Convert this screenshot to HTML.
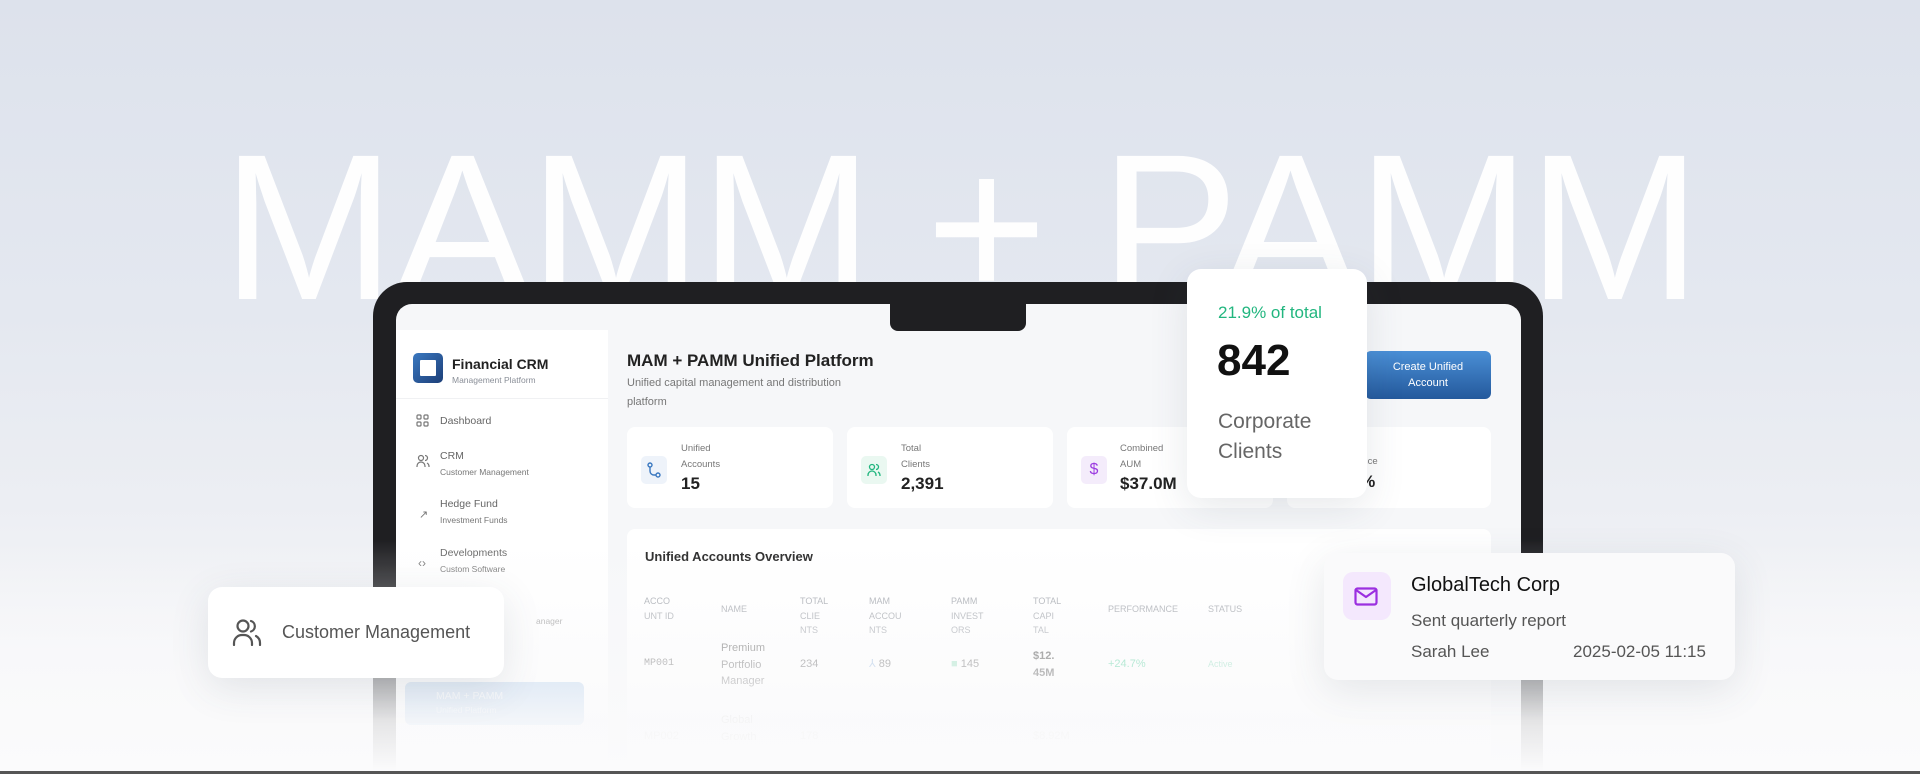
<!DOCTYPE html>
<html><head><meta charset="utf-8"><style>
*{margin:0;padding:0;box-sizing:border-box}
html,body{width:1920px;height:774px;overflow:hidden}
body{position:relative;font-family:"Liberation Sans",sans-serif;background:linear-gradient(180deg,#dde2ec 0%,#e4e8f0 40%,#eceef3 65%,#f5f6f8 85%,#fbfbfc 100%)}
#wrap{position:absolute;left:0;top:0;width:1920px;height:774px;overflow:hidden}
.abs{position:absolute}
.big{left:222px;top:124px;font-size:208px;color:#fff;letter-spacing:-2.5px;white-space:nowrap;line-height:1;font-weight:400;opacity:.97}
.frame{left:373px;top:282px;width:1170px;height:489px;background:#1f1f22;border-radius:34px 34px 0 0}
.screen{left:396px;top:304px;width:1125px;height:467px;background:#f6f7f9;border-radius:16px 16px 0 0;overflow:hidden}
.notch{left:890px;top:304px;width:136px;height:27px;background:#1f1f22;border-radius:0 0 8px 8px}
.side{left:0;top:26px;width:212px;height:441px;background:#fff}
.t{color:#222}
.card{background:#fff;border-radius:8px}
.muted{color:#8a8f98}
.th{font-size:9px;color:#a0a4ab;line-height:14.5px}
.td{font-size:11px;color:#666;line-height:16.5px}
.fade{left:0;top:540px;width:1920px;height:231px;background:linear-gradient(180deg,rgba(250,250,251,0) 0%,rgba(250,250,251,.45) 40%,rgba(250,250,251,.9) 78%,#fbfbfc 100%)}
.fl{background:#fff;border-radius:14px;box-shadow:0 10px 40px rgba(60,70,90,.12)}
</style></head><body><div id="wrap">
<div class="abs big">MAMM + PAMM</div>
<div class="abs frame"></div>
<div class="abs screen">
  <div class="abs side">
    <div class="abs" style="left:17px;top:23px;width:30px;height:30px;border-radius:5px;background:linear-gradient(135deg,#3a78c0,#1d3f78)"><div style="margin:7px;width:16px;height:16px;background:#fff;border-radius:1px"></div></div>
    <div class="abs t" style="left:56px;top:26px;font-size:14px;font-weight:bold">Financial CRM</div>
    <div class="abs muted" style="left:56px;top:45px;font-size:8.5px">Management Platform</div>
    <div class="abs" style="left:0;top:68px;width:212px;height:1px;background:#f0f1f3"></div>
    <svg class="abs" style="left:20px;top:84px" width="13" height="13" viewBox="0 0 13 13" fill="none" stroke="#777" stroke-width="1.2"><rect x="1" y="1" width="4" height="4" rx="1"/><rect x="8" y="1" width="4" height="4" rx="1"/><rect x="1" y="8" width="4" height="4" rx="1"/><rect x="8" y="8" width="4" height="4" rx="1"/></svg>
    <div class="abs" style="left:44px;top:85px;font-size:10.5px;color:#666">Dashboard</div>
    <svg class="abs" style="left:20px;top:124px" width="14" height="14" viewBox="0 0 14 14" fill="none" stroke="#777" stroke-width="1.2"><circle cx="5" cy="4" r="2.5"/><path d="M1 13v-1a4 4 0 0 1 8 0v1M9 1.5a2.5 2.5 0 0 1 0 5M11 9a4 4 0 0 1 2 3.5V13"/></svg>
    <div class="abs" style="left:44px;top:120px;font-size:10.5px;color:#666">CRM</div>
    <div class="abs" style="left:44px;top:137px;font-size:8.5px;color:#777">Customer Management</div>
    <div class="abs" style="left:44px;top:168px;font-size:10.5px;color:#666">Hedge Fund</div>
    <div class="abs" style="left:44px;top:185px;font-size:8.5px;color:#777">Investment Funds</div>
    <div class="abs" style="left:23px;top:178px;font-size:11px;color:#777">↗</div>
    <div class="abs" style="left:22px;top:226px;font-size:12px;color:#777">‹›</div>
    <div class="abs" style="left:44px;top:217px;font-size:10.5px;color:#666">Developments</div>
    <div class="abs" style="left:44px;top:234px;font-size:8.5px;color:#777">Custom Software</div>
    <div class="abs" style="left:140px;top:286px;font-size:8.5px;color:#999">anager</div>
    <div class="abs" style="left:9px;top:352px;width:179px;height:43px;border-radius:6px;background:#a9c8ea"></div>
    <div class="abs" style="left:40px;top:360px;font-size:10.5px;color:#eef4fb">MAM + PAMM</div>
    <div class="abs" style="left:40px;top:375px;font-size:8.5px;color:#e3ecf7">Unified Platform</div>
  </div>
  <div class="abs t" style="left:231px;top:47px;font-size:17px;font-weight:bold">MAM + PAMM Unified Platform</div>
  <div class="abs" style="left:231px;top:70px;font-size:11px;color:#777;line-height:19px;width:240px">Unified capital management and distribution platform</div>
  <div class="abs" style="left:969px;top:47px;width:126px;height:48px;border-radius:6px;background:linear-gradient(180deg,#4a8fd6,#24599c);color:#fff;font-size:11px;text-align:center;line-height:16px;padding-top:8px">Create Unified<br>Account</div>
  <div class="abs card" style="left:231px;top:123px;width:206px;height:81px"></div>
  <div class="abs card" style="left:451px;top:123px;width:206px;height:81px"></div>
  <div class="abs card" style="left:671px;top:123px;width:206px;height:81px"></div>
  <div class="abs card" style="left:891px;top:123px;width:204px;height:81px"></div>
  <div class="abs" style="left:245px;top:152px;width:26px;height:28px;background:#eef3fa;border-radius:5px"></div>
  <svg class="abs" style="left:251px;top:158px" width="14" height="16" viewBox="0 0 14 16" fill="none" stroke="#3a78c0" stroke-width="1.4"><circle cx="3" cy="3" r="2"/><path d="M3 5v4a4 4 0 0 0 4 4h2"/><circle cx="11" cy="13" r="2"/></svg>
  <div class="abs" style="left:465px;top:152px;width:26px;height:28px;background:#eaf8f1;border-radius:5px"></div>
  <svg class="abs" style="left:471px;top:159px" width="14" height="14" viewBox="0 0 14 14" fill="none" stroke="#22b67f" stroke-width="1.3"><circle cx="5" cy="4" r="2.5"/><path d="M1 13v-1a4 4 0 0 1 8 0v1M9 1.5a2.5 2.5 0 0 1 0 5M11 9a4 4 0 0 1 2 3.5V13"/></svg>
  <div class="abs" style="left:685px;top:152px;width:26px;height:28px;background:#f4ecfb;border-radius:5px;color:#9b3be0;font-size:16px;text-align:center;line-height:28px">$</div>
  <div class="abs" style="left:285px;top:137px;font-size:9.5px;color:#777;line-height:16px">Unified<br>Accounts</div>
  <div class="abs t" style="left:285px;top:170px;font-size:17px;font-weight:bold">15</div>
  <div class="abs" style="left:505px;top:137px;font-size:9.5px;color:#777;line-height:16px">Total<br>Clients</div>
  <div class="abs t" style="left:505px;top:170px;font-size:17px;font-weight:bold">2,391</div>
  <div class="abs" style="left:724px;top:137px;font-size:9.5px;color:#777;line-height:16px">Combined<br>AUM</div>
  <div class="abs t" style="left:724px;top:170px;font-size:17px;font-weight:bold">$37.0M</div>
  <div class="abs" style="left:950px;top:152px;font-size:9.5px;color:#777">rmance</div>
  <div class="abs t" style="left:950px;top:168px;font-size:17px;font-weight:bold">.9%</div>
  <div class="abs card" style="left:231px;top:225px;width:864px;height:242px"></div>
  <div class="abs t" style="left:249px;top:245px;font-size:13px;font-weight:bold">Unified Accounts Overview</div>
  <div class="abs th" style="left:248px;top:290px">ACCO<br>UNT ID</div>
  <div class="abs th" style="left:325px;top:298px">NAME</div>
  <div class="abs th" style="left:404px;top:290px">TOTAL<br>CLIE<br>NTS</div>
  <div class="abs th" style="left:473px;top:290px">MAM<br>ACCOU<br>NTS</div>
  <div class="abs th" style="left:555px;top:290px">PAMM<br>INVEST<br>ORS</div>
  <div class="abs th" style="left:637px;top:290px">TOTAL<br>CAPI<br>TAL</div>
  <div class="abs th" style="left:712px;top:298px">PERFORMANCE</div>
  <div class="abs th" style="left:812px;top:298px">STATUS</div>
  <div class="abs td" style="left:248px;top:352px;font-family:'Liberation Mono',monospace;font-size:10px">MP001</div>
  <div class="abs td" style="left:325px;top:336px">Premium<br>Portfolio<br>Manager</div>
  <div class="abs td" style="left:404px;top:352px">234</div>
  <div class="abs td" style="left:473px;top:352px"><span style="color:#9bbbe0">⅄</span> 89</div>
  <div class="abs td" style="left:555px;top:352px"><span style="color:#9be0c0">■</span> 145</div>
  <div class="abs td" style="left:637px;top:344px;color:#444;font-weight:bold">$12.<br>45M</div>
  <div class="abs td" style="left:712px;top:352px;color:#4fcf9a">+24.7%</div>
  <div class="abs td" style="left:812px;top:352px;color:#8fdcbb;font-size:9px">Active</div>
  <div class="abs td" style="left:325px;top:408px;color:#bbb">Global<br>Growth</div>
  <div class="abs td" style="left:248px;top:424px;color:#ccc">MP002</div>
  <div class="abs td" style="left:404px;top:424px;color:#ccc">178</div>
  <div class="abs td" style="left:637px;top:424px;color:#ccc">$8.92M</div>
</div>
<div class="abs notch"></div>
<div class="abs fade"></div>

<div class="abs fl" style="left:1187px;top:269px;width:180px;height:229px"></div>
<div class="abs" style="left:1218px;top:303px;font-size:17px;color:#22b67f">21.9% of total</div>
<div class="abs" style="left:1217px;top:336px;font-size:44px;font-weight:bold;color:#111">842</div>
<div class="abs" style="left:1218px;top:407px;font-size:21px;color:#666;line-height:30px">Corporate<br>Clients</div>

<div class="abs fl" style="left:208px;top:587px;width:296px;height:91px"></div>
<svg class="abs" style="left:232px;top:619px" width="30" height="27" viewBox="0 0 30 27" fill="none" stroke="#555" stroke-width="2.2" stroke-linecap="round"><circle cx="11" cy="7" r="5.5"/><path d="M2 26v-2a8 8 0 0 1 8-8h2a8 8 0 0 1 8 8v2"/><path d="M19 2a5.5 5.5 0 0 1 0 10.5"/><path d="M24 17a8 8 0 0 1 4 7v2"/></svg>
<div class="abs" style="left:282px;top:622px;font-size:18px;color:#555">Customer Management</div>

<div class="abs fl" style="left:1324px;top:553px;width:411px;height:127px;background:#fafafb"></div>
<div class="abs" style="left:1343px;top:572px;width:48px;height:48px;border-radius:10px;background:#f4e8fd"></div>
<svg class="abs" style="left:1354px;top:587px" width="24" height="19" viewBox="0 0 24 19" fill="none" stroke="#9b2fe0" stroke-width="2.2" stroke-linejoin="round"><rect x="1.5" y="1.5" width="21" height="16" rx="2"/><path d="M2 3l10 7 10-7"/></svg>
<div class="abs" style="left:1411px;top:574px;font-size:20px;color:#111">GlobalTech Corp</div>
<div class="abs" style="left:1411px;top:611px;font-size:17px;color:#555">Sent quarterly report</div>
<div class="abs" style="left:1411px;top:642px;font-size:17px;color:#555">Sarah Lee</div>
<div class="abs" style="left:1573px;top:642px;font-size:17px;color:#555">2025-02-05 11:15</div>
<div class="abs" style="left:0;top:771px;width:1920px;height:3px;background:#555"></div>
</div></body></html>
